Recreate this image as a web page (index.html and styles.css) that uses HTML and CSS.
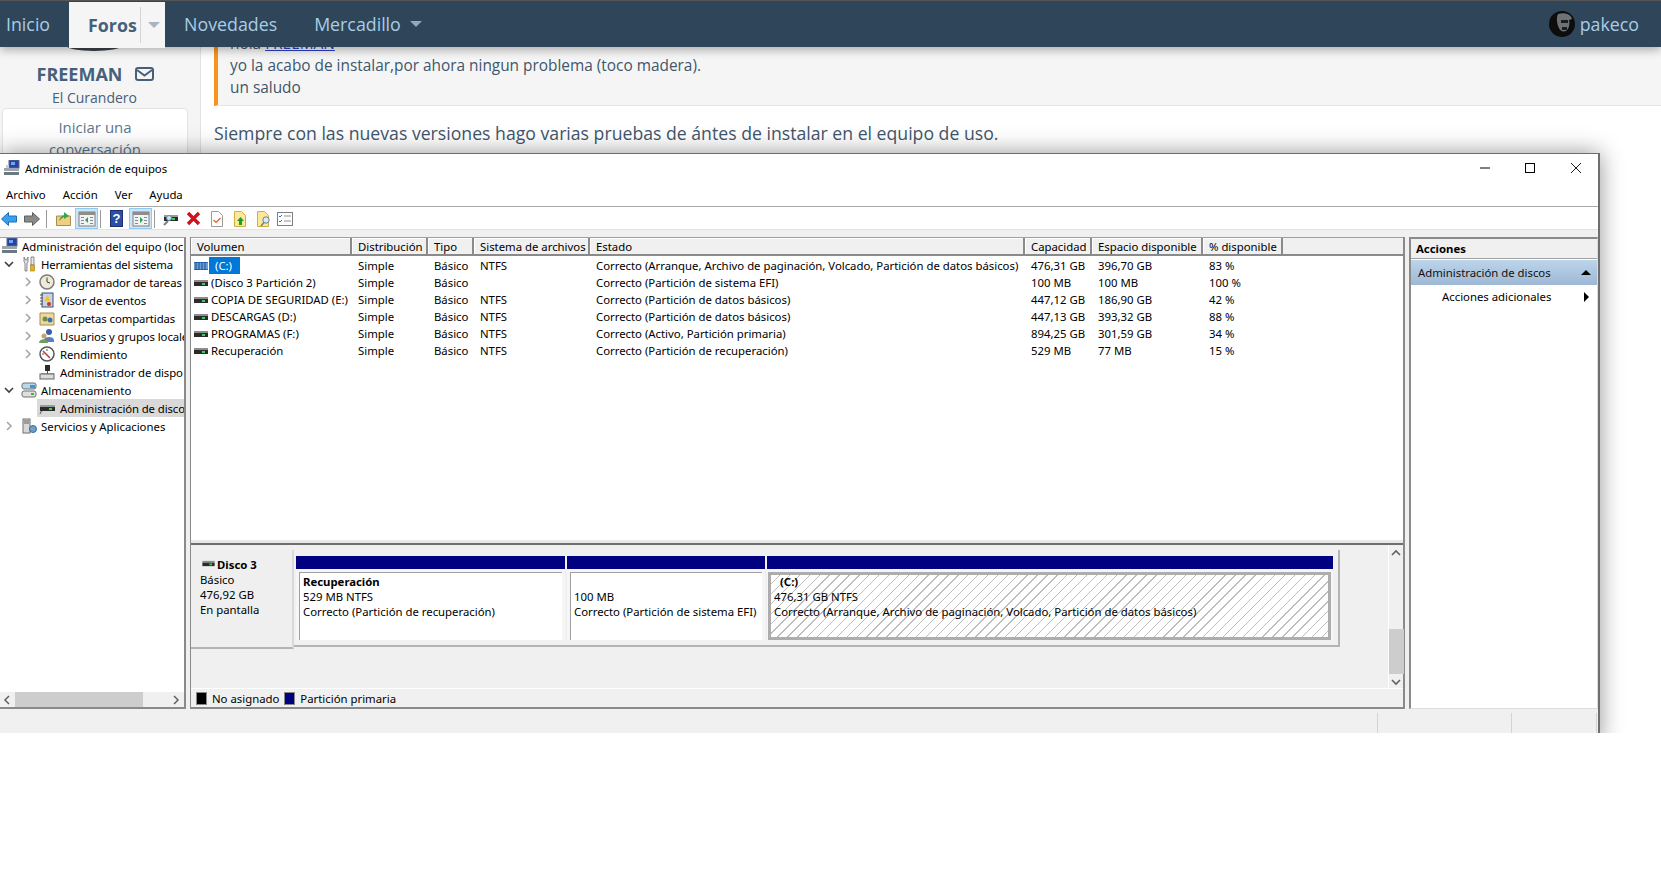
FILE: index.html
```html
<!DOCTYPE html>
<html lang="es">
<head>
<meta charset="utf-8">
<title>Administración de equipos</title>
<link rel="stylesheet" href="styles.css">
</head>
<body>
<svg class="defs" width="0" height="0" aria-hidden="true">
  <symbol id="drive" viewBox="0 0 14 8">
    <rect x="0" y="1" width="14" height="2" fill="#8d8d8d"/>
    <rect x="0" y="3" width="14" height="4" fill="#2b2b2b"/>
    <rect x="8" y="4" width="3" height="2" fill="#39d353"/>
  </symbol>
  <symbol id="chev-r" viewBox="0 0 8 10"><path d="M2 1l4 4-4 4" fill="none" stroke="#a6a6a6" stroke-width="1.6"/></symbol>
  <symbol id="chev-d" viewBox="0 0 10 8"><path d="M1 2l4 4 4-4" fill="none" stroke="#404040" stroke-width="1.6"/></symbol>
  <symbol id="pane" viewBox="0 0 18 16">
    <rect x="1" y="1" width="16" height="14" fill="#f3f3f3" stroke="#7f7f7f"/>
    <rect x="1" y="1" width="16" height="3" fill="#8d8d8d"/>
    <path d="M3 6h3v1H3zM3 9h3v1H3zM3 12h3v1H3zM12 6h3v1h-3zM12 9h3v1h-3zM12 12h3v1h-3z" fill="#7a8a9a"/>
  </symbol>
</svg>
<div class="screen">
  <header class="nav">
    <a class="nav-item nav-inicio">Inicio</a>
    <div class="nav-tab"><b>Foros</b><span class="tab-sep"></span><i class="caret caret-tab"></i></div>
    <a class="nav-item nav-nov">Novedades</a>
    <a class="nav-item nav-mer">Mercadillo<i class="caret"></i></a>
    <div class="nav-user">
      <svg class="user-ava" viewBox="0 0 26 26"><circle cx="13" cy="13" r="13" fill="#0d0d0d"/><path d="M9 3c6-2 13 0 14 5l-3 1c1 4 0 9-3 11-3 1-6 0-7-3-2-4-3-10-1-14z" fill="#6f7275"/><path d="M12 9h7v3h-7zM13 16h5v3h-5z" fill="#1c1c1c"/></svg>
      <span>pakeco</span>
    </div>
  </header>
  <div class="forum">
    <aside class="side">
      <div class="avatar"></div>
      <div class="side-name">FREEMAN
        <svg class="mail" viewBox="0 0 19 14"><rect x="1" y="1" width="17" height="12" rx="2" fill="none" stroke="#47607a" stroke-width="2"/><path d="M2 3l7.500 5.500L17 3" fill="none" stroke="#47607a" stroke-width="2"/></svg>
      </div>
      <div class="side-role">El Curandero</div>
      <div class="side-card">Iniciar una conversación</div>
    </aside>
    <main class="post">
      <blockquote class="quote">
        <div class="q-first">hola <a>FREEMAN</a></div>
        <div>yo la acabo de instalar,por ahora ningun problema (toco madera).</div>
        <div>un saludo</div>
      </blockquote>
      <p class="para">Siempre con las nuevas versiones hago varias pruebas de ántes de instalar en el equipo de uso.</p>
    </main>
  </div>

  <section class="win">
    <div class="titlebar">
      <svg class="title-ico" viewBox="0 0 16 16"><rect x="5" y="0" width="10" height="8" fill="#2a3fa8" stroke="#5a6a80"/><rect x="7" y="2" width="4" height="3" fill="#6fa8e8"/><rect x="0" y="8" width="15" height="3" fill="#9aa5ad"/><rect x="0" y="12" width="15" height="3" fill="#6b7a80"/><rect x="2" y="5" width="3" height="3" fill="#c7ced3"/></svg>
      <span class="title-text">Administración de equipos</span>
      <div class="win-btns">
        <svg viewBox="0 0 10 10"><path d="M0 5h10" stroke="#000"/></svg>
        <svg viewBox="0 0 10 10"><rect x=".5" y=".5" width="9" height="9" fill="none" stroke="#000"/></svg>
        <svg class="btn-close" viewBox="0 0 10 10"><path d="M0 0l10 10M10 0L0 10" stroke="#000" stroke-width=".9"/></svg>
      </div>
    </div>
    <nav class="menu"><span>Archivo</span><span>Acción</span><span>Ver</span><span>Ayuda</span></nav>
    <div class="toolbar">
      <svg class="tb a-back" viewBox="0 0 16 14"><path d="M.5 7L7.500 .5V4H15.500V10H7.500V13.500Z" fill="#3aa0ea" stroke="#1a6fb8"/></svg>
      <svg class="tb a-fwd" viewBox="0 0 16 14"><path d="M15.500 7L8.500 .5V4H.5V10H8.500V13.500Z" fill="#8a8a8a" stroke="#5e5e5e"/></svg>
      <span class="tb-sep s1"></span>
      <svg class="tb a-up" viewBox="0 0 15 15"><path d="M.5 5h14v9.500H.5z" fill="#f0cf82" stroke="#a98c4c"/><path d="M3 10c1-4 3-5 5-6V1l5 4-5 3V6c-2 1-3 2-5 4z" fill="#3ba54a"/></svg>
      <span class="tb-btn b1"><svg viewBox="0 0 18 16"><use href="#pane"/><path d="M10 6v6L7 9z" fill="#21a84a"/></svg></span>
      <span class="tb-sep s2"></span>
      <svg class="tb a-help" viewBox="0 0 13 17"><rect x=".5" y=".5" width="12" height="16" fill="#2a4fa8" stroke="#1c2f6e"/><text x="6.500" y="13" class="help-q">?</text></svg>
      <span class="tb-btn b2"><svg viewBox="0 0 18 16"><use href="#pane"/><path d="M8 6v6l3-3z" fill="#21a84a"/></svg></span>
      <span class="tb-sep s3"></span>
      <svg class="tb a-drive" viewBox="0 0 16 14"><path d="M2 13L6 9" stroke="#7d7d7d" stroke-width="2"/><rect x="2" y="3" width="14" height="6" fill="#2b2b2b"/><rect x="2" y="3" width="14" height="2" fill="#9a9a9a"/><rect x="10" y="6" width="3" height="2" fill="#39d353"/><circle cx="7" cy="6" r="2.500" fill="#cfe3f3" stroke="#6a8aa5"/></svg>
      <svg class="tb a-x" viewBox="0 0 15 15"><path d="M2 2l11 11M13 2L2 13" stroke="#d3101c" stroke-width="3.400"/></svg>
      <svg class="tb a-doc" viewBox="0 0 12 16"><path d="M.5 .5h7l4 4v11H.5z" fill="#fff" stroke="#9a9a9a"/><path d="M2.500 9l2.500 2.500L9.500 7" fill="none" stroke="#e8562a" stroke-width="1.200"/></svg>
      <svg class="tb a-fold" viewBox="0 0 12 16"><path d="M.5 .5h7l4 4v11H.5z" fill="#fbe89a" stroke="#d0b040"/><path d="M6.500 6l3.500 4H8v4H5v-4H3z" fill="#18a02c"/></svg>
      <svg class="tb a-find" viewBox="0 0 15 16"><path d="M.5 .5h7l4 4v11H.5z" fill="#fbe89a" stroke="#d0b040"/><circle cx="9" cy="9" r="3.200" fill="#dceaf5" stroke="#6a7f92"/><path d="M7 11.500l-3 3.500" stroke="#6a7f92" stroke-width="1.500"/></svg>
      <svg class="tb a-list" viewBox="0 0 16 14"><rect x=".5" y=".5" width="15" height="13" fill="#fff" stroke="#808080"/><path d="M2 4l1 1 2-2M2 9l1 1 2-2" fill="none" stroke="#2a6fd0"/><path d="M7 4h7M7 9h7" stroke="#909090"/></svg>
    </div>

    <div class="panes">
      <div class="tree">
        <div class="tree-list">
          <div class="node l0"><svg class="nico" viewBox="0 0 16 16"><rect x="5" y="0" width="10" height="8" fill="#2a3fa8" stroke="#5a6a80"/><rect x="7" y="2" width="4" height="3" fill="#6fa8e8"/><rect x="0" y="8" width="15" height="3" fill="#9aa5ad"/><rect x="0" y="12" width="15" height="3" fill="#6b7a80"/></svg><span>Administración del equipo (loc</span></div>
          <div class="node l1 tight"><svg class="chev-d"><use href="#chev-d"/></svg><svg class="nico" viewBox="0 0 16 16"><path d="M3 1v5l1 1v8h2V7l1-1V1L5.500 4H4.500zM10 1h3v8h-3z" fill="#e8e8e8" stroke="#707070" stroke-width=".8"/><rect x="9.500" y="9" width="4" height="6" fill="#e8b020" stroke="#a07a10" stroke-width=".6"/></svg><span>Herramientas del sistema</span></div>
          <div class="node l2"><svg class="chev-r"><use href="#chev-r"/></svg><svg class="nico" viewBox="0 0 16 16"><circle cx="8" cy="8" r="7" fill="#efe9d8" stroke="#7d7d7d" stroke-width="1.500"/><path d="M8 3.500V8l3 1" fill="none" stroke="#404040"/></svg><span>Programador de tareas</span></div>
          <div class="node l2"><svg class="chev-r"><use href="#chev-r"/></svg><svg class="nico" viewBox="0 0 16 16"><rect x="3" y="1" width="11" height="14" fill="#c9d3e2" stroke="#3d4f78"/><path d="M1 3h3M1 6h3M1 9h3M1 12h3" stroke="#555"/><path d="M8.500 3l3 6h-6z" fill="#f2c32e"/><circle cx="10" cy="12" r="2" fill="#c0392b"/></svg><span>Visor de eventos</span></div>
          <div class="node l2"><svg class="chev-r"><use href="#chev-r"/></svg><svg class="nico" viewBox="0 0 16 16"><path d="M1 3h14v12H1z" fill="#edd9a0" stroke="#a98c4c"/><circle cx="6" cy="9" r="2.500" fill="#6d8f4e"/><circle cx="11" cy="10" r="2.500" fill="#3d6fa8"/></svg><span>Carpetas compartidas</span></div>
          <div class="node l2"><svg class="chev-r"><use href="#chev-r"/></svg><svg class="nico" viewBox="0 0 16 16"><circle cx="10" cy="4" r="3" fill="#3d5fa8"/><path d="M5 12c0-4 10-4 10 0v2H5z" fill="#5d7fc0"/><circle cx="5" cy="8" r="2.500" fill="#c9a26a"/><path d="M0 15c0-5 9-5 9 0z" fill="#6d9f5e"/></svg><span>Usuarios y grupos locale</span></div>
          <div class="node l2"><svg class="chev-r"><use href="#chev-r"/></svg><svg class="nico" viewBox="0 0 16 16"><circle cx="8" cy="8" r="7" fill="#fff" stroke="#555" stroke-width="1.500"/><path d="M4 5l7 7" stroke="#c0392b" stroke-width="1.500"/><path d="M8 3v2M3 8h2" stroke="#555"/></svg><span>Rendimiento</span></div>
          <div class="node l2 nochev"><svg class="nico" viewBox="0 0 16 16"><rect x="6" y="1" width="5" height="6" fill="#2b2b2b"/><path d="M8.500 7v3M2 10h13" stroke="#555"/><rect x="1" y="10" width="14" height="5" fill="#dcdcdc" stroke="#666"/></svg><span>Administrador de dispo</span></div>
          <div class="node l1"><svg class="chev-d"><use href="#chev-d"/></svg><svg class="nico" viewBox="0 0 16 16"><rect x="1" y="1" width="14" height="6" rx="2" fill="#bcd8e8" stroke="#707070"/><rect x="9" y="3" width="5" height="3" fill="#3a9ad0"/><rect x="1" y="9" width="14" height="6" rx="2" fill="#e0e0e0" stroke="#707070"/><rect x="10" y="11" width="3" height="2" fill="#39b553"/></svg><span>Almacenamiento</span></div>
          <div class="node l2 nochev sel"><svg class="nico" viewBox="0 0 16 16"><path d="M1 14L4 8h11" fill="none" stroke="#555"/><rect x="1" y="5" width="15" height="2" fill="#9a9a9a"/><rect x="1" y="7" width="15" height="4" fill="#2b2b2b"/><rect x="10" y="8" width="3" height="2" fill="#39d353"/></svg><span>Administración de disco</span></div>
          <div class="node l1"><svg class="chev-r"><use href="#chev-r"/></svg><svg class="nico" viewBox="0 0 16 16"><rect x="2" y="1" width="7" height="14" fill="#d8d8d8" stroke="#707070"/><path d="M3 3h5M3 5h5" stroke="#606060"/><circle cx="12" cy="11" r="3.500" fill="#6fa0c8" stroke="#3d6a90"/></svg><span>Servicios y Aplicaciones</span></div>
        </div>
        <div class="hscroll"><svg viewBox="0 0 8 10"><path d="M6 1L2 5l4 4" fill="none" stroke="#606060" stroke-width="1.500"/></svg><div class="hthumb"></div><svg viewBox="0 0 8 10"><path d="M2 1l4 4-4 4" fill="none" stroke="#606060" stroke-width="1.500"/></svg></div>
      </div>

      <div class="center">
        <div class="listview">
          <div class="lv-row lv-head"><span>Volumen</span><span>Distribución</span><span>Tipo</span><span>Sistema de archivos</span><span>Estado</span><span>Capacidad</span><span>Espacio disponible</span><span>% disponible</span></div>
          <div class="lv-row"><span class="vol"><svg class="hatch-ico" viewBox="0 0 14 8"><rect width="14" height="8" fill="#2b6fc0"/><path d="M0 2h14M0 4h14M0 6h14" stroke="#a9cdf0"/><path d="M2 0v8M5 0v8M8 0v8M11 0v8" stroke="#1a4f90"/></svg><em class="picked">(C:)</em></span><span>Simple</span><span>Básico</span><span>NTFS</span><span>Correcto (Arranque, Archivo de paginación, Volcado, Partición de datos básicos)</span><span>476,31 GB</span><span>396,70 GB</span><span>83 %</span></div>
          <div class="lv-row"><span class="vol"><svg class="dr"><use href="#drive"/></svg>(Disco 3 Partición 2)</span><span>Simple</span><span>Básico</span><span></span><span>Correcto (Partición de sistema EFI)</span><span>100 MB</span><span>100 MB</span><span>100 %</span></div>
          <div class="lv-row"><span class="vol"><svg class="dr"><use href="#drive"/></svg>COPIA DE SEGURIDAD (E:)</span><span>Simple</span><span>Básico</span><span>NTFS</span><span>Correcto (Partición de datos básicos)</span><span>447,12 GB</span><span>186,90 GB</span><span>42 %</span></div>
          <div class="lv-row"><span class="vol"><svg class="dr"><use href="#drive"/></svg>DESCARGAS (D:)</span><span>Simple</span><span>Básico</span><span>NTFS</span><span>Correcto (Partición de datos básicos)</span><span>447,13 GB</span><span>393,32 GB</span><span>88 %</span></div>
          <div class="lv-row"><span class="vol"><svg class="dr"><use href="#drive"/></svg>PROGRAMAS (F:)</span><span>Simple</span><span>Básico</span><span>NTFS</span><span>Correcto (Activo, Partición primaria)</span><span>894,25 GB</span><span>301,59 GB</span><span>34 %</span></div>
          <div class="lv-row"><span class="vol"><svg class="dr"><use href="#drive"/></svg>Recuperación</span><span>Simple</span><span>Básico</span><span>NTFS</span><span>Correcto (Partición de recuperación)</span><span>529 MB</span><span>77 MB</span><span>15 %</span></div>
        </div>
        <div class="diskview">
          <div class="disk-area">
            <div class="disk-row">
              <div class="disk-label">
                <div class="disk-name"><svg class="dr-small"><use href="#drive"/></svg><b>Disco 3</b></div>
                <div>Básico</div><div>476,92 GB</div><div>En pantalla</div>
              </div>
              <div class="parts">
                <div class="part p1"><div class="bar"></div><div class="pbody"><b>Recuperación</b><div>529 MB NTFS</div><div>Correcto (Partición de recuperación)</div></div></div>
                <div class="part p2"><div class="bar"></div><div class="pbody"><b>&nbsp;</b><div>100 MB</div><div>Correcto (Partición de sistema EFI)</div></div></div>
                <div class="part p3"><div class="bar"></div><div class="pbody hatched"><b class="c-name">(C:)</b><div>476,31 GB NTFS</div><div>Correcto (Arranque, Archivo de paginación, Volcado, Partición de datos básicos)</div></div></div>
              </div>
            </div>
            <div class="vscroll"><svg viewBox="0 0 10 8"><path d="M1 6l4-4 4 4" fill="none" stroke="#606060" stroke-width="1.600"/></svg><div class="vthumb"></div><svg viewBox="0 0 10 8"><path d="M1 2l4 4 4-4" fill="none" stroke="#606060" stroke-width="1.600"/></svg></div>
          </div>
          <div class="legend"><i class="sw black"></i><span>No asignado</span><i class="sw navy"></i><span>Partición primaria</span></div>
        </div>
      </div>

      <div class="actions">
        <div class="act-head">Acciones</div>
        <div class="act-sec"><span>Administración de discos</span><i class="tri-up"></i></div>
        <div class="act-item"><span>Acciones adicionales</span><i class="tri-right"></i></div>
      </div>
    </div>
    <footer class="status"><span class="st s-a"></span><span class="st s-b"></span><span class="st s-c"></span></footer>
  </section>
</div>
</body>
</html>
```
FILE: styles.css
```css
* { box-sizing: border-box; }
html, body { margin: 0; background: #fff; }
body { height: 871px; overflow: hidden; font-family: "Open Sans", "Noto Sans", sans-serif; }
.defs { position: absolute; }
.screen { position: relative; height: 733px; overflow: hidden; background: #fff; }

/* forum navbar */
.nav { position: relative; z-index: 2; display: flex; align-items: center; height: 47px; background: #2f4559; border-top: 1px solid #555; box-shadow: 0 3px 9px rgba(0,0,0,.3); color: #a9cde6; font-size: 17.8px; }
.nav-item { white-space: nowrap; }
.nav-inicio { margin-left: 6px; }
.nav-tab { display: flex; align-items: center; margin: 1px 0 0 19px; width: 96px; height: 46px; background: #f5f5f5; color: #47607a; padding-left: 19px; }
.nav-tab b { font-weight: 700; }
.tab-sep { width: 1px; height: 36px; margin: 0 7px 0 3px; background: #d5d5d5; }
.nav-nov { margin-left: 19px; }
.nav-mer { margin-left: 37px; display: flex; align-items: center; }
.caret { display: block; width: 0; height: 0; margin-left: 9px; border: 6px solid transparent; border-top: 6px solid #8fa9bf; border-bottom: 0; }
.caret-tab { margin-left: 0; border-top-color: #a8b4bf; }
.nav-user { margin-left: auto; margin-right: 22px; display: flex; align-items: center; gap: 5px; }
.user-ava { width: 26px; height: 26px; }

/* forum content */
.forum { display: grid; grid-template-columns: 201px 1fr; margin-top: -12px; height: 118px; overflow: hidden; color: #3f566c; font-size: 15.4px; }
.side { background: #f5f5f5; border-right: 1px solid #e3e3e3; text-align: center; padding-right: 13px; color: #47607a; }
.avatar { width: 54px; height: 16px; margin: 0 auto; background: #3a3f4a; border-radius: 0 0 27px 27px / 0 0 5px 5px; }
.side-name { display: flex; align-items: center; justify-content: center; gap: 13px; margin-top: 11px; height: 24px; padding-left: 4px; font-size: 18px; font-weight: 700; }
.mail { width: 19px; height: 14px; }
.side-role { height: 21px; margin-top: 1px; padding-left: 2px; line-height: 22px; font-size: 14px; }
.side-card { margin: 0 0 0 2px; width: 186px; height: 60px; padding: 7px 25px; background: #fff; border: 1px solid #e3e3e3; border-radius: 4px; line-height: 22px; color: #5d778f; font-size: 15px; }
.post { min-width: 0; padding-left: 13px; }
.quote { display: flow-root; margin: 0 -1px 0 0; padding: 0 0 6px 12px; height: 71px; background: #f5f5f5; border-left: 4px solid #f7941d; border-bottom: 1px solid #e5e5e5; line-height: 22px; }
.q-first { margin-top: -2px; }
.quote a { color: #2a3fc0; text-decoration: underline; }
.para { margin: 15px 0 0; font-size: 17.66px; line-height: 24px; color: #3f566c; }

/* desktop window, floating over the forum */
.win { position: absolute; left: 0; top: 153px; width: 1600px; height: 590px; display: flex; flex-direction: column; background: #fff; border-top: 1px solid #6e6e6e; border-right: 2px solid #6e6e6e; box-shadow: 0 0 22px rgba(0,0,0,.42); color: #000; font-family: "Noto Sans", "Open Sans", sans-serif; font-size: 11.35px; }
.titlebar { display: flex; align-items: center; height: 30px; padding: 0 0 2px 4px; flex: none; }
.title-ico { width: 16px; height: 16px; }
.title-text { margin-left: 5px; }
.win-btns { margin-left: auto; display: flex; gap: 35px; padding-right: 17px; }
.win-btns svg { width: 10px; height: 10px; }
.win-btns .btn-close { margin-left: 1px; }
.menu { display: flex; gap: 17px; height: 23px; padding: 0 0 2px 6px; align-items: center; flex: none; border-bottom: 1px solid #aaa; }
.toolbar { position: relative; flex: none; height: 23px; border-bottom: 1px solid #e3e3e3; display: flex; align-items: center; padding: 1px 0 0 1px; }
.tb { flex: none; }
.a-back, .a-fwd { width: 16px; height: 14px; }
.a-fwd { margin-left: 7px; }
.tb-sep { flex: none; width: 1px; height: 18px; background: #9a9a9a; }
.s1 { margin-left: 6px; }
.a-up { width: 15px; height: 15px; margin-left: 9px; }
.tb-btn { flex: none; display: flex; align-items: center; justify-content: center; width: 23px; height: 21px; background: #cde6f7; border: 1px solid #90c8f6; }
.tb-btn svg { width: 18px; height: 16px; }
.b1 { margin-left: 4px; }
.s2 { margin-left: 2px; }
.a-help { width: 13px; height: 17px; margin-left: 9px; }
.help-q { fill: #fff; font: 700 13px "Liberation Sans", sans-serif; text-anchor: middle; }
.b2 { margin-left: 6px; }
.s3 { margin-left: 2px; }
.a-drive { width: 16px; height: 14px; margin-left: 7px; }
.a-x { width: 15px; height: 15px; margin-left: 8px; }
.a-doc { width: 12px; height: 16px; margin-left: 10px; }
.a-fold { width: 12px; height: 16px; margin-left: 11px; }
.a-find { width: 15px; height: 16px; margin-left: 11px; }
.a-list { width: 16px; height: 14px; margin-left: 5px; }

.panes { flex: none; height: 483px; display: grid; grid-template-columns: 186px 1fr 189px; column-gap: 4px; padding: 7px 0 4px; background: #f0f0f0; }
.tree { display: flex; flex-direction: column; background: #fff; border-top: 1px solid #a0a0a0; border-right: 2px solid #8a8a8a; border-bottom: 2px solid #8a8a8a; }
.tree-list { flex: 1; margin-top: -1px; overflow: hidden; }
.node { display: flex; align-items: center; height: 18px; white-space: nowrap; overflow: hidden; }
.nico { width: 16px; height: 16px; flex: none; }
.node span { margin-left: 5px; }
.l0 { padding-left: 2px; }
.l0 span { margin-left: 4px; }
.l1 { padding-left: 4px; }
.l1 span { margin-left: 4px; }
.l2 { padding-left: 24px; letter-spacing: -.1px; }
.tight { letter-spacing: -.2px; }
.nochev { padding-left: 39px; }
.chev-d { width: 10px; height: 8px; margin-right: 7px; flex: none; }
.chev-r { width: 8px; height: 10px; margin-right: 7px; flex: none; }
.l1 .chev-r { margin-left: 1px; margin-right: 8px; }
.sel { background: #d9d9d9; margin-left: 37px; padding-left: 2px; }
.hscroll { flex: none; display: flex; align-items: center; height: 15px; background: #f0f0f0; padding: 0 3px; margin-bottom: 0; }
.hscroll svg { width: 8px; height: 10px; flex: none; }
.hthumb { height: 15px; width: 128px; margin: 0 29px 0 4px; background: #cdcdcd; }

.center { display: flex; flex-direction: column; min-width: 0; border-right: 2px solid #8a8a8a; border-bottom: 2px solid #8a8a8a; border-left: 1px solid #8a8a8a; }
.listview { height: 306px; flex: none; background: #fff; border-top: 1px solid #a0a0a0; border-bottom: 3px solid #e8e8e8; box-shadow: 0 2px 0 #6e6e6e; }
.lv-row { display: grid; grid-template-columns: 161px 76px 46px 116px 435px 67px 111px 80px 1fr; height: 17px; line-height: 17px; white-space: nowrap; }
.lv-row > span { padding-left: 6px; overflow: hidden; }
.lv-head { height: 18px; margin-bottom: 1px; background: #f0f0f0; border-bottom: 2px solid #8a8a8a; }
.lv-head > span { border-right: 2px solid #8a8a8a; box-shadow: inset 1px 1px 0 #fff; }
.lv-head > span:nth-child(n+1) { height: 16px; line-height: 18px; }
.lv-row .vol { display: flex; align-items: center; padding-left: 3px; overflow: visible; }
.dr { width: 14px; height: 8px; margin-right: 3px; flex: none; }
.hatch-ico { width: 14px; height: 8px; flex: none; margin-right: 2px; }
.picked { font-style: normal; color: #fff; background: #0078d7; padding: 0 8px 0 6px; height: 17px; margin-left: -1px; }

.diskview { flex: 1; display: flex; flex-direction: column; background: #f0f0f0; margin-top: 2px; min-height: 0; }
.disk-area { flex: 1; display: flex; justify-content: space-between; min-height: 0; }
.disk-row { display: flex; align-items: flex-start; padding-top: 5px; }
.disk-label { width: 103px; height: 99px; padding: 7px 0 0 9px; background: #efefef; border-bottom: 2px solid #b4b4b4; border-right: 2px solid #d8d8d8; line-height: 15px; }
.disk-name { display: flex; align-items: center; height: 15px; padding-left: 2px; }
.disk-name b { font-weight: 700; margin-left: 2px; }
.dr-small { width: 13px; height: 7px; flex: none; margin-bottom: 3px; }
.parts { display: flex; gap: 2px; height: 97px; padding: 6px 5px 7px 2px; border-right: 2px solid #b4b4b4; border-bottom: 2px solid #b4b4b4; }
.part { display: flex; flex-direction: column; background: #f6f6f6; height: 84px; }
.p1 { width: 269px; }
.p2 { width: 198px; }
.p3 { width: 566px; }
.bar { height: 13px; flex: none; background: #000080; }
.pbody { height: 68px; margin: 3px 3px 0; padding: 1px 3px 0; background: #fff; border-top: 1px solid #a0a0a0; border-left: 1px solid #a0a0a0; line-height: 15px; white-space: nowrap; overflow: hidden; }
.pbody b { display: block; font-weight: 700; }
.hatched { margin: 3px 2px 0 1px; border: 3px solid #adadad; padding: 0 0 0 3px; background: repeating-linear-gradient(135deg, #fff 0 6px, #bdbdbd 6px 7px); }
.c-name { margin-top: -1px; padding-left: 6px; }
.vscroll { width: 15px; flex: none; display: flex; flex-direction: column; align-items: center; background: #f0f0f0; border-left: 1px solid #fff; padding-top: 4px; }
.vscroll svg { width: 10px; height: 8px; flex: none; }
.vthumb { width: 15px; height: 45px; margin: 72px 0 4px; background: #cdcdcd; }
.legend { flex: none; height: 19px; display: flex; align-items: center; padding-left: 5px; border-top: 1px solid #fff; }
.sw { display: block; width: 11px; height: 13px; border: 1px solid #888; flex: none; }
.black { background: #000; }
.navy { background: #000080; margin-left: 5px; }
.legend span { margin-left: 5px; }

.actions { background: #fff; border-top: 2px solid #8a8a8a; border-left: 2px solid #8a8a8a; border-bottom: 1px solid #dcdcdc; border-right: 1px solid #dcdcdc; }
.act-head { height: 20px; line-height: 20px; padding-left: 5px; font-weight: 700; background: #f0f0f0; border-bottom: 1px solid #a0a0a0; }
.act-sec { display: flex; align-items: center; justify-content: space-between; height: 25px; margin-top: 1px; padding: 0 6px 0 7px; background: linear-gradient(#bcd5ea, #9eb8d5); color: #111; }
.act-item { display: flex; align-items: center; justify-content: space-between; height: 23px; padding: 0 8px 0 31px; }
.tri-up { width: 0; height: 0; border: 5px solid transparent; border-bottom: 5px solid #000; border-top: 0; }
.tri-right { width: 0; height: 0; border: 5px solid transparent; border-left: 5px solid #000; border-right: 0; }

.status { flex: 1; display: grid; grid-template-columns: 1378px 134px 85px; background: #f0f0f0; border-top: 0; }
.st { border-right: 1px solid #d4d4d4; }
```
